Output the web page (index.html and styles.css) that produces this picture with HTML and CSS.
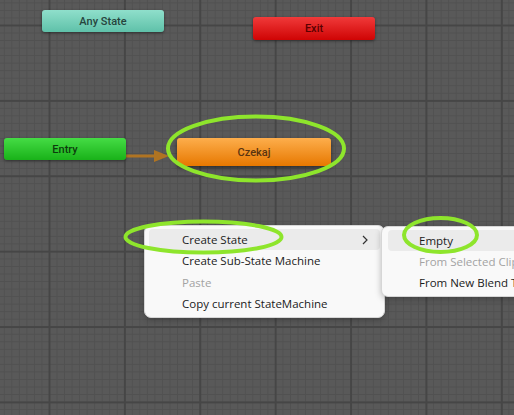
FILE: index.html
```html
<!DOCTYPE html>
<html>
<head>
<meta charset="utf-8">
<link rel="stylesheet" href="styles.css">
</head>
<body>
<div class="canvas">
  <svg class="links" width="514" height="415" viewBox="0 0 514 415">
    <line x1="126" y1="156" x2="156" y2="156" stroke="#b07422" stroke-width="3"/>
    <polygon points="154,150 169,156 154,162" fill="#b07422"/>
  </svg>

  <div class="node any" style="left:42px;top:10px;">Any State</div>
  <div class="node exit" style="left:253px;top:17px;">Exit</div>
  <div class="node entry" style="left:4px;top:138px;">Entry</div>
  <div class="node state" style="left:177px;top:138px;">Czekaj</div>

  <div class="menu main-menu">
    <div class="item hover"><span>Create State</span><svg class="chev" width="6" height="10" viewBox="0 0 6 10"><polyline points="1,1 5,5 1,9" fill="none" stroke="#333" stroke-width="1.2"/></svg></div>
    <div class="item"><span>Create Sub-State Machine</span></div>
    <div class="item disabled"><span>Paste</span></div>
    <div class="item"><span>Copy current StateMachine</span></div>
  </div>

  <div class="menu sub-menu">
    <div class="item hover"><span>Empty</span></div>
    <div class="item disabled"><span>From Selected Clip</span></div>
    <div class="item"><span>From New Blend Tree</span></div>
  </div>

  <svg class="marks" width="514" height="415" viewBox="0 0 514 415">
    <ellipse cx="256" cy="148.5" rx="88" ry="32" fill="none" stroke="#8ee52c" stroke-width="4"/>
    <ellipse cx="203.5" cy="237" rx="78" ry="15.5" fill="none" stroke="#8ee52c" stroke-width="4"/>
    <ellipse cx="440.5" cy="235" rx="36.5" ry="17" fill="none" stroke="#8ee52c" stroke-width="4"/>
  </svg>
</div>
</body>
</html>
```
FILE: styles.css
```css
html, body {
  margin: 0;
  padding: 0;
}
body {
  width: 514px;
  height: 415px;
  overflow: hidden;
  background: #595959;
}
.canvas {
  position: relative;
  width: 514px;
  height: 415px;
  overflow: hidden;
  background-color: #595959;
  background-image:
    linear-gradient(to right, #464646 0, #464646 2px, transparent 2px),
    linear-gradient(to bottom, #464646 0, #464646 2px, transparent 2px),
    linear-gradient(to right, #515151 0, #515151 1px, transparent 1px),
    linear-gradient(to bottom, #515151 0, #515151 1px, transparent 1px);
  background-size: 75.4px 100%, 100% 75.4px, 7.54px 100%, 100% 7.54px;
  background-position: 48.5px 0, 0 24.5px, 49px 0, 0 25px;
}
.links, .marks {
  position: absolute;
  left: 0;
  top: 0;
}
.marks {
  z-index: 10;
}
.node {
  position: absolute;
  width: 122px;
  height: 22px;
  border-radius: 3px;
  display: flex;
  align-items: center;
  justify-content: center;
  font-family: "Roboto", "Liberation Sans", sans-serif;
  font-weight: 500;
  font-size: 11px;
  box-shadow: 0 1px 3px rgba(0,0,0,0.45);
}
.any {
  background: linear-gradient(to bottom, #8fdfcb, #5fc1a9);
  color: #27443d;
}
.exit {
  height: 23px;
  background: linear-gradient(to bottom, #f03a3a, #cf0404);
  color: #5a0000;
}
.entry {
  background: linear-gradient(to bottom, #45dc45, #19b219);
  color: #0d3d0d;
}
.state {
  width: 154px;
  height: 28px;
  background: linear-gradient(to bottom, #fdae4c, #e77800);
  color: #5a3410;
  box-shadow: 0 2px 4px rgba(0,0,0,0.5);
}
.menu {
  position: absolute;
  background: #f9f9f9;
  border: 1px solid #d6d6d6;
  border-radius: 7px;
  box-shadow: 0 2px 6px rgba(0,0,0,0.25);
  display: flex;
  flex-direction: column;
  padding: 3px 4px;
  box-sizing: border-box;
  font-family: "Open Sans", "Noto Sans", sans-serif;
  font-size: 11.5px;
  color: #1b1b1b;
  z-index: 5;
}
.main-menu {
  left: 144px;
  top: 225px;
  width: 241px;
  height: 93px;
}
.sub-menu {
  left: 381px;
  top: 226px;
  width: 160px;
  height: 71px;
  padding-left: 6px;
}
.item {
  height: 22px;
  display: flex;
  align-items: center;
  justify-content: space-between;
  padding: 0 12px 0 33px;
  border-radius: 4px;
  white-space: nowrap;
}
.sub-menu .item {
  padding-left: 31px;
}
.item.hover {
  background: #ebebeb;
}
.item.disabled {
  color: #a3a3a3;
}
.chev {
  display: block;
}
```
